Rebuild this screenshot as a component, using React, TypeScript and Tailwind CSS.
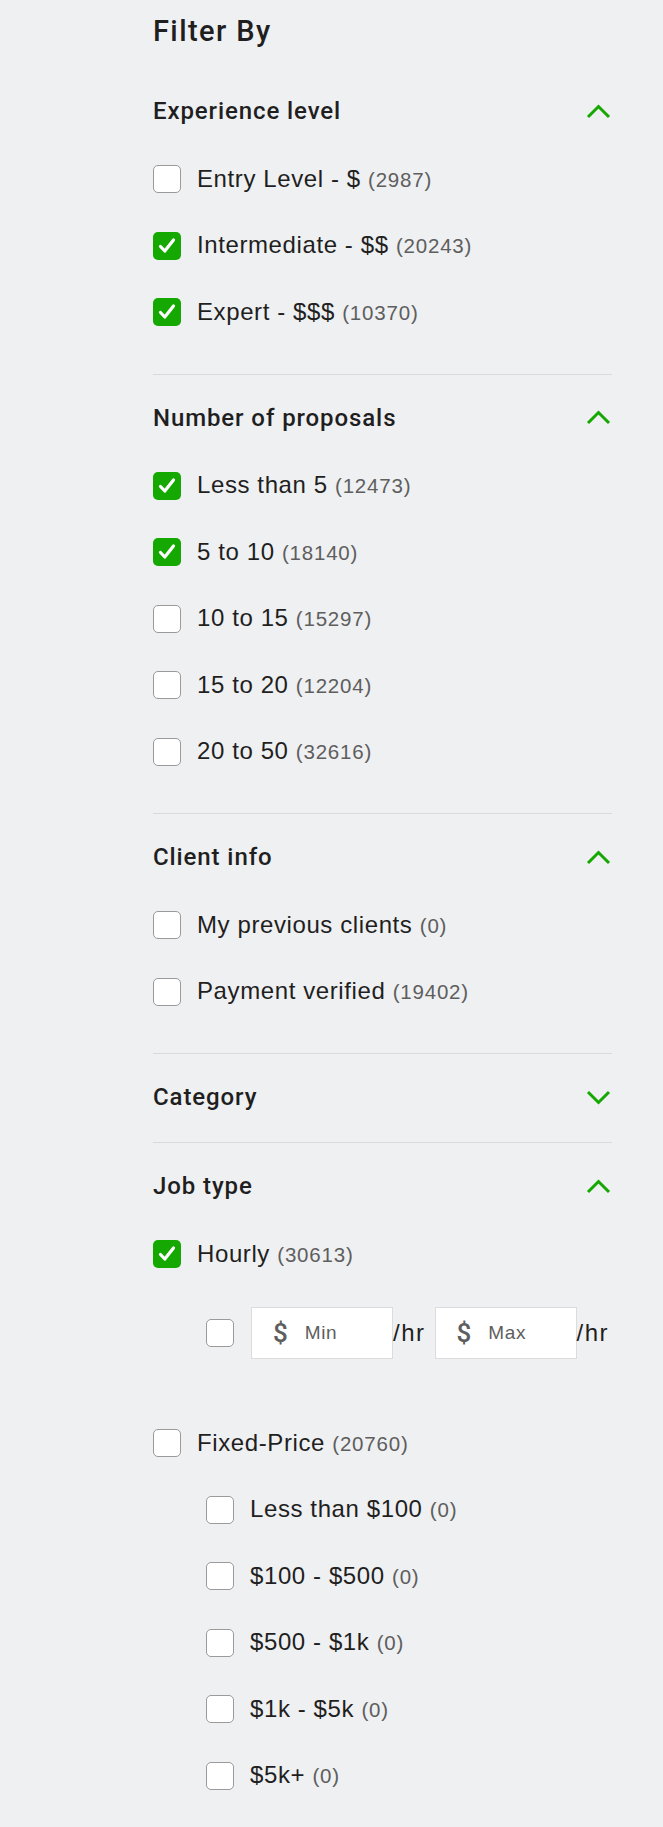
import React from 'react';

interface Option {
  label: string;
  count: number;
  checked?: boolean;
}

interface Section {
  title: string;
  open: boolean;
  options?: Option[];
}

const sections: Section[] = [
  {
    title: 'Experience level',
    open: true,
    options: [
      { label: 'Entry Level - $', count: 2987 },
      { label: 'Intermediate - $$', count: 20243, checked: true },
      { label: 'Expert - $$$', count: 10370, checked: true },
    ],
  },
  {
    title: 'Number of proposals',
    open: true,
    options: [
      { label: 'Less than 5', count: 12473, checked: true },
      { label: '5 to 10', count: 18140, checked: true },
      { label: '10 to 15', count: 15297 },
      { label: '15 to 20', count: 12204 },
      { label: '20 to 50', count: 32616 },
    ],
  },
  {
    title: 'Client info',
    open: true,
    options: [
      { label: 'My previous clients', count: 0 },
      { label: 'Payment verified', count: 19402 },
    ],
  },
  { title: 'Category', open: false },
];

const fixedPrice: Option[] = [
  { label: 'Less than $100', count: 0 },
  { label: '$100 - $500', count: 0 },
  { label: '$500 - $1k', count: 0 },
  { label: '$1k - $5k', count: 0 },
  { label: '$5k+', count: 0 },
];

function Checkbox({ checked }: { checked?: boolean }) {
  if (checked) {
    return (
      <span className="flex h-[28px] w-[28px] shrink-0 items-center justify-center rounded-[5px] bg-[#14a800]">
        <svg width="28" height="28" viewBox="0 0 28 28" fill="none">
          <path d="M7.5 14.5 L11.8 19 L20.5 8" stroke="white" strokeWidth="3.2" strokeLinecap="round" strokeLinejoin="round" />
        </svg>
      </span>
    );
  }
  return <span className="h-[28px] w-[28px] shrink-0 rounded-[5px] border border-[#9a9a9a] bg-white" />;
}

function Chevron({ up }: { up: boolean }) {
  return (
    <svg width="25" height="15" viewBox="0 0 25 15" fill="none" className="mr-[1px]">
      <path
        d={up ? 'M2 13 L12.5 2.5 L23 13' : 'M2 2 L12.5 12.5 L23 2'}
        stroke="#14a800"
        strokeWidth="3"
      />
    </svg>
  );
}

function OptionRow({ option, indent }: { option: Option; indent?: boolean }) {
  return (
    <div className={`flex h-[66.5px] items-center gap-4 ${indent ? 'pl-[53px]' : ''}`}>
      <Checkbox checked={option.checked} />
      <span className="text-[24px] leading-[32px] tracking-[0.6px] text-[#1f1f1f]">
        {option.label}{' '}
        <span className="text-[20.5px] tracking-[0.8px] text-[#5e5e5e]">({option.count})</span>
      </span>
    </div>
  );
}

function Header({ title, open }: { title: string; open: boolean }) {
  return (
    <div className="flex h-[56px] items-center justify-between">
      <h3 className="font-['Roboto',sans-serif] text-[24px] font-medium tracking-[0.9px] text-[#1f1f1f]">{title}</h3>
      <Chevron up={open} />
    </div>
  );
}

function RateInput({ placeholder }: { placeholder: string }) {
  return (
    <div className="flex h-[52px] w-[142px] items-center border border-[#dcdcdc] bg-white pl-[21px]">
      <span className="font-['Roboto',sans-serif] text-[26px] font-medium leading-none text-[#5e5e5e]">$</span>
      <span className="ml-[17px] text-[19px] tracking-[0.6px] text-[#5e5e5e]">{placeholder}</span>
    </div>
  );
}

export default function App() {
  return (
    <div className="min-h-[1827px] bg-[#eff0f2] pl-[153px] pr-[51px] font-['Liberation_Sans',Arial,sans-serif]">
      <h2 className="pt-[13px] font-['Roboto',sans-serif] text-[29px] font-medium leading-[36px] tracking-[1.4px] text-[#1f1f1f]">
        Filter By
      </h2>

      {sections.map((s, i) => (
        <div
          key={s.title}
          className={`${i === 0 ? 'pt-[34px]' : 'pt-[15px]'} ${s.open ? 'pb-[28px]' : 'pb-[17px]'} border-b border-[#d9dadc]`}
        >
          <Header title={s.title} open={s.open} />
          {s.open && s.options && (
            <div className="mt-[7px]">
              {s.options.map((o) => (
                <OptionRow key={o.label} option={o} />
              ))}
            </div>
          )}
        </div>
      ))}

      <div className="pt-[15px] pb-[18px]">
        <Header title="Job type" open />
        <div className="mt-[7px]">
          <OptionRow option={{ label: 'Hourly', count: 30613, checked: true }} />
          <div className="mt-[19.5px] flex items-center pl-[53px]">
            <Checkbox />
            <div className="ml-[17px] flex items-center">
              <RateInput placeholder="Min" />
              <span className="text-[24px] tracking-[1.5px] text-[#1f1f1f]">/hr</span>
              <div className="ml-[9px]">
                <RateInput placeholder="Max" />
              </div>
              <span className="text-[24px] tracking-[1.5px] text-[#1f1f1f]">/hr</span>
            </div>
          </div>
          <div className="mt-[50.75px]">
            <OptionRow option={{ label: 'Fixed-Price', count: 20760 }} />
            {fixedPrice.map((o) => (
              <OptionRow key={o.label} option={o} indent />
            ))}
          </div>
        </div>
      </div>
    </div>
  );
}
